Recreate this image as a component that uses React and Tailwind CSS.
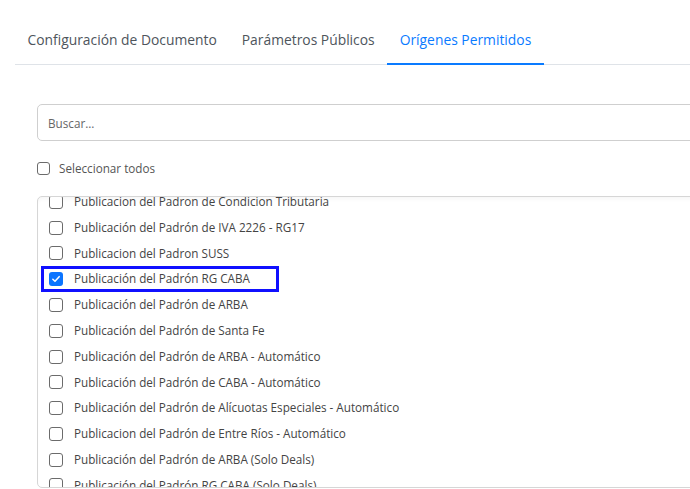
import React, { useState } from "react";

const origenes = [
    { id: 1, label: "Publicacion del Padron de Condicion Tributaria" },
    { id: 2, label: "Publicación del Padrón de IVA 2226 - RG17" },
    { id: 3, label: "Publicacion del Padron SUSS" },
    { id: 4, label: "Publicación del Padrón RG CABA", checked: true, marked: true },
    { id: 5, label: "Publicación del Padrón de ARBA" },
    { id: 6, label: "Publicación del Padrón de Santa Fe" },
    { id: 7, label: "Publicación del Padrón de ARBA - Automático" },
    { id: 8, label: "Publicación del Padrón de CABA - Automático" },
    { id: 9, label: "Publicación del Padrón de Alícuotas Especiales - Automático" },
    { id: 10, label: "Publicacion del Padrón de Entre Ríos - Automático" },
    { id: 11, label: "Publicación del Padrón de ARBA (Solo Deals)" },
    { id: 12, label: "Publicación del Padrón RG CABA (Solo Deals)" },
];

function CheckBox({ checked }) {
    if (checked) {
        return (
            <span className="flex h-[14px] w-[14px] shrink-0 items-center justify-center rounded-[3px] bg-[#0b74ff]">
                <svg viewBox="0 0 12 12" className="h-[10px] w-[10px]" fill="none">
                    <path d="M2.2 6.3 4.8 8.8 9.8 3.2" stroke="white" strokeWidth="1.8" strokeLinecap="round" strokeLinejoin="round" />
                </svg>
            </span>
        );
    }
    return <span className="h-[14px] w-[14px] shrink-0 rounded-[3px] border border-[#6b6b6b] bg-white"></span>;
}

function App() {
    const [search, setSearch] = useState("");
    const tabs = ["Configuración de Documento", "Parámetros Públicos", "Orígenes Permitidos"];
    const active = 2;

    return (
        <div className="h-[489px] w-[690px] overflow-hidden bg-white font-['Open_Sans',sans-serif]">
            <div className="ml-[15px] flex border-b border-[#dfe3e8] pt-[29px]">
                {tabs.map((tab, i) => (
                    <div
                        key={tab}
                        className={
                            i === active
                                ? "-mb-px border-b-2 border-[#0a7bff] px-[12.5px] pb-[12px] text-[13.85px] leading-[22px] text-[#0a7bff]"
                                : "px-[12.5px] pb-[13px] text-[13.85px] leading-[22px] text-[#4e555c]"
                        }
                    >
                        {tab}
                    </div>
                ))}
            </div>

            <div className="pl-[37px] pt-[39px]">
                <input
                    type="text"
                    placeholder="Buscar..."
                    value={search}
                    onChange={(e) => setSearch(e.target.value)}
                    className="h-[37px] w-[700px] rounded-[5px] border border-[#cfcfcf] px-[10px] text-[11.7px] text-[#555] placeholder:text-[#666] focus:outline-none"
                />

                <label className="mt-[19px] flex items-center gap-[9px]">
                    <span className="h-[13px] w-[13px] rounded-[3px] border border-[#6b6b6b]"></span>
                    <span className="text-[11.7px] leading-[16px] text-[#555]">Seleccionar todos</span>
                </label>

                <div className="mt-[20px] h-[292px] w-[700px] overflow-hidden rounded-[5px] border border-[#d6d6d6] shadow-[inset_0_4px_4px_-2px_rgba(0,0,0,0.04)]">
                    <ul className="-mt-[8px] pl-[3px]">
                        {origenes.map((o) => (
                            <li
                                key={o.id}
                                className={
                                    o.marked
                                        ? "flex h-[26px] w-[238px] items-center gap-[11px] border-[3px] border-[#1010ff] pl-[5px]"
                                        : "flex h-[25.75px] items-center gap-[11px] pl-[8px]"
                                }
                            >
                                <CheckBox checked={o.checked} />
                                <span className="whitespace-nowrap text-[11.7px] text-[#444]">{o.label}</span>
                            </li>
                        ))}
                    </ul>
                </div>
            </div>
        </div>
    );
}

export default App;
